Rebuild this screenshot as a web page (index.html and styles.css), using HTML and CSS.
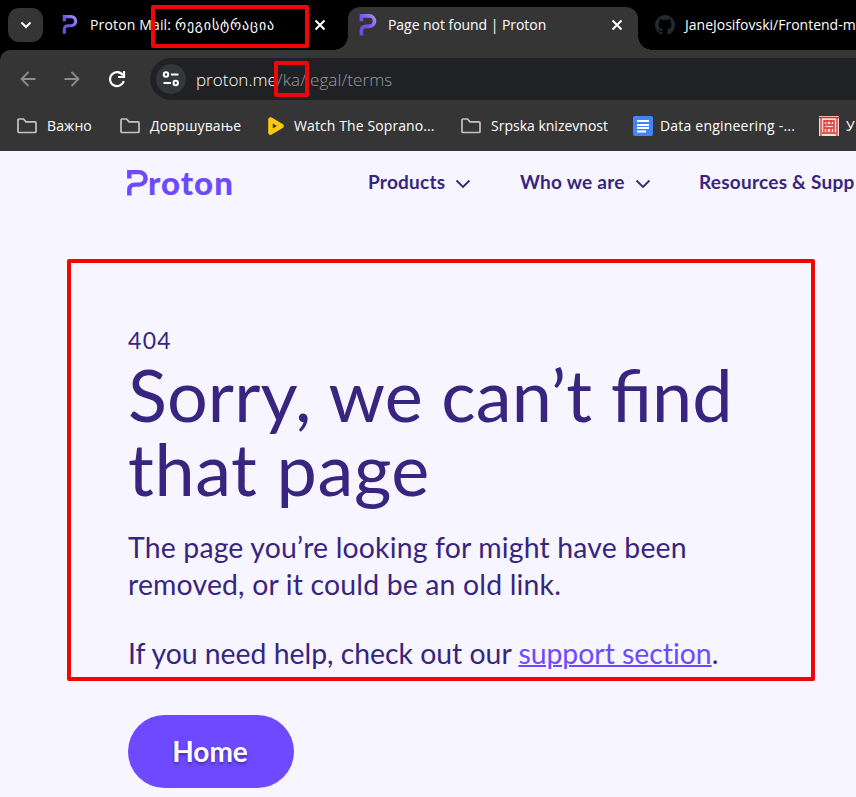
FILE: index.html
```
<!DOCTYPE html>
<html lang="en">
<head>
<meta charset="utf-8">
<title>Page not found | Proton</title>
<link rel="stylesheet" href="styles.css">
</head>
<body>
<svg class="defs" width="0" height="0">
  <defs>
    <linearGradient id="violet" x1="1" y1="0" x2="0" y2="1"><stop offset="0" stop-color="#a48cff"/><stop offset=".55" stop-color="#7254e8"/><stop offset="1" stop-color="#6b50d8"/></linearGradient>
    <symbol id="mark" viewBox="0 0 20 26"><path d="M2.200 8.500V2.200H11.500a6.200 6.200 0 0 1 0 12.400H8Q2.200 14.600 2.200 20V25.500" fill="none" stroke-width="4.200"/></symbol>
    <symbol id="folder" viewBox="0 0 22 18"><path d="M2 3a1 1 0 0 1 1-1H7.500l2.500 2.800H19a1 1 0 0 1 1 1V14.500a1 1 0 0 1-1 1H3a1 1 0 0 1-1-1Z" fill="none" stroke="#c4c4c4" stroke-width="1.700"/></symbol>
    <symbol id="close" viewBox="0 0 12 12"><path d="M1.500 1.500L10.500 10.500M10.500 1.500L1.500 10.500" stroke="#fff" stroke-width="2"/></symbol>
    <symbol id="chev" viewBox="0 0 16 10"><path d="M1.500 1.500L8 8L14.500 1.500" fill="none" stroke="#372580" stroke-width="1.800"/></symbol>
  </defs>
</svg>
<header class="browser">
  <div class="tabs">
    <button class="tab-search"><svg width="12" height="8" viewBox="0 0 12 8"><path d="M1.500 1.500L6 6L10.500 1.500" fill="none" stroke="#fff" stroke-width="2"/></svg></button>
    <div class="tab first"><svg class="fav" width="16" height="19"><use href="#mark"/></svg><span class="label t1">Proton Mail:&nbsp;<span class="georgian">რეგისტრაცია</span></span><svg class="x" width="12" height="12"><use href="#close"/></svg></div>
    <div class="tab active"><svg class="fav" width="18" height="22"><use href="#mark"/></svg><span class="label t2">Page not found | Proton</span><svg class="x" width="12" height="12"><use href="#close"/></svg></div>
    <div class="tab last"><svg class="gh" width="20" height="20" viewBox="0 0 16 16"><path fill="#24292f" d="M8 0C3.580 0 0 3.580 0 8c0 3.540 2.290 6.530 5.470 7.590.4.070.55-.17.55-.38v-1.490c-2.010.37-2.530-.49-2.690-.94-.09-.23-.48-.94-.82-1.130-.28-.15-.68-.52-.01-.53.63-.01 1.080.58 1.230.82.72 1.210 1.870.87 2.330.66.07-.52.28-.87.51-1.070-1.780-.2-3.640-.89-3.640-3.950 0-.87.310-1.590.82-2.150-.08-.2-.36-1.020.08-2.120 0 0 .67-.21 2.200.82a7.500 7.500 0 0 1 4 0c1.530-1.040 2.200-.82 2.200-.82.44 1.100.16 1.920.08 2.120.51.56.82 1.270.82 2.150 0 3.070-1.870 3.750-3.650 3.950.29.25.54.73.54 1.480v2.200c0 .21.150.46.55.38A8 8 0 0 0 16 8c0-4.420-3.580-8-8-8Z"/></svg><span class="label t3">JaneJosifovski/Frontend-m</span></div>
  </div>
  <div class="toolbar">
    <svg class="nav-icon" width="16" height="16" viewBox="0 0 16 16"><path d="M8.500 1L1.500 8L8.500 15M1.500 8H15.500" fill="none" stroke="#8c8c8c" stroke-width="1.800"/></svg>
    <svg class="nav-icon" width="16" height="16" viewBox="0 0 16 16"><path d="M7.500 1L14.500 8L7.500 15M14.500 8H.5" fill="none" stroke="#8c8c8c" stroke-width="1.800"/></svg>
    <svg class="nav-icon" width="18" height="18" viewBox="0 0 18 18"><path d="M14.800 5.200A7 7 0 1 0 15.800 11M16 1V7H10" fill="none" stroke="#fff" stroke-width="2.200"/></svg>
    <div class="address">
      <span class="site"><svg width="18" height="16" viewBox="0 0 18 16"><g fill="none" stroke="#fff" stroke-width="2"><circle cx="4" cy="3.500" r="2.200"/><path d="M9 3.500H16.500M1.500 12H9"/><circle cx="13.700" cy="12" r="2.200"/></g></svg></span>
      <span class="url host">proton.me</span><span class="url path">/ka/legal/terms</span>
    </div>
  </div>
  <div class="bookmarks">
    <div class="bm b1"><svg width="22" height="18"><use href="#folder"/></svg><span>Важно</span></div>
    <div class="bm b2"><svg width="22" height="18"><use href="#folder"/></svg><span>Довршување</span></div>
    <div class="bm b3"><svg width="18" height="20" viewBox="0 0 18 20"><path d="M3.500 3.500L14.500 10L3.500 16.500Z" fill="none" stroke="#fbc90d" stroke-width="4.600" stroke-linejoin="round"/></svg><span>Watch The Soprano...</span></div>
    <div class="bm b4"><svg width="22" height="18"><use href="#folder"/></svg><span>Srpska knizevnost</span></div>
    <div class="bm b5"><svg width="20" height="20" viewBox="0 0 20 20"><rect width="20" height="20" rx="2" fill="#4285f4"/><path d="M4 5H16M4 9H16M4 12H16M4 15.500H13" stroke="#fff" stroke-width="1.900"/></svg><span>Data engineering -...</span></div>
    <div class="bm b6"><svg width="20" height="20" viewBox="0 0 20 20"><rect width="20" height="20" fill="#f6dcd8"/><path d="M0 1.500H20M2 2V20M18 2V20M5 4V16M15 4V16M5 5H15M5 9H15M5 12H15M3 17H17M8 4V8M12 4V8M8 12V16M12 12V16" stroke="#d5302c" stroke-width="1.300"/></svg><span>У</span></div>
  </div>
</header>
<main>
  <nav>
    <a class="logo"><svg width="21" height="26" viewBox="0 0 20 26" preserveAspectRatio="none"><use href="#mark"/></svg><span>roton</span></a>
    <a class="menu m1"><span>Products</span><svg width="16" height="10"><use href="#chev"/></svg></a>
    <a class="menu m2"><span>Who we are</span><svg width="16" height="10"><use href="#chev"/></svg></a>
    <a class="menu m3"><span>Resources &amp; Supp</span></a>
  </nav>
  <section class="error">
    <p class="code">404</p>
    <h1><span>Sorry, we can’t </span><span class="lig">fi</span><span>nd</span><br><span class="second">that page</span></h1>
    <p class="copy">The page you’re looking for might have been<br>removed, or it could be an old link.</p>
    <p class="copy help">If you need help, check out our <a>support section</a>.</p>
    <a class="home">Home</a>
  </section>
</main>
<div class="mark-box box-title"></div>
<div class="mark-box box-locale"></div>
<div class="mark-box box-error"></div>
</body>
</html>
```
FILE: styles.css
```
* { box-sizing: border-box; }
body { margin: 0; width: 856px; height: 797px; overflow: hidden; position: relative; background: #f7f5ff; font-family: Lato, sans-serif; color: #372580; }
svg { display: block; flex: none; }
.defs { position: absolute; }
span, a { white-space: nowrap; }
.browser { height: 151px; background: #000; color: #fff; font-family: "Open Sans", "DejaVu Sans", sans-serif; overflow: hidden; }
.tabs { height: 50px; display: flex; padding-left: 8px; }
.tab-search { flex: none; width: 35px; height: 34px; margin-top: 8px; border: 0; border-radius: 11px; background: #353535; display: flex; align-items: center; justify-content: center; padding: 0; }
.tab { display: flex; align-items: center; height: 43px; margin-top: 7px; padding-bottom: 8px; font-size: 14px; flex: none; }
.fav { stroke: url(#violet); }
.logo svg { stroke: #6d4aff; }
.first { width: 305px; padding-left: 19px; }
.first .t1 { margin-left: 12px; letter-spacing: .15px; }
.first .x, .active .x { margin-left: auto; }
.first .x { margin-right: 22px; }
.georgian { font-family: "DejaVu Sans", sans-serif; font-size: 14px; letter-spacing: .85px; }
.active { width: 290px; padding-left: 11px; background: #353535; border-radius: 12px 12px 0 0; position: relative; }
.active .label { margin-left: 11px; letter-spacing: -.05px; }
.active .x { margin-right: 15px; }
.active::before, .active::after { content: ""; position: absolute; bottom: 0; width: 14px; height: 14px; }
.active::before { left: -14px; background: radial-gradient(circle at 0 0, transparent 13.5px, #353535 14px); }
.active::after { right: -14px; background: radial-gradient(circle at 100% 0, transparent 13.5px, #353535 14px); }
.last { padding-left: 17px; }
.last .label { margin-left: 10px; }
.toolbar { height: 57px; background: #353535; border-radius: 10px 0 0 0; display: flex; align-items: center; padding-left: 20px; }
.nav-icon { margin-right: 28px; }
.nav-icon:nth-child(3) { margin-right: 24px; }
.address { flex: 1; height: 42px; margin-top: 1px; background: #202124; border-radius: 21px 0 0 21px; display: flex; align-items: center; padding-left: 6px; font-size: 17px; font-weight: 300; }
.site { width: 30px; height: 30px; border-radius: 50%; background: #353638; display: flex; align-items: center; justify-content: center; margin-right: 10px; }
.path { color: #9a9a9c; letter-spacing: .1px; }
.bookmarks { height: 44px; background: #353535; display: flex; align-items: center; padding: 0 0 7px 16px; font-size: 14px; letter-spacing: .1px; }
.bm { display: flex; align-items: center; gap: 9px; flex: none; }
.b1 { width: 103px; }
.b2 { width: 148px; }
.b3 { width: 193px; }
.b4 { width: 173px; letter-spacing: 0; }
.b5 { width: 186px; gap: 7px; letter-spacing: .2px; }
.b6 { gap: 7px; }
nav { height: 64px; display: flex; align-items: center; padding: 0 0 3px 127px; font-size: 19px; font-weight: 700; letter-spacing: .25px; overflow: hidden; }
.logo { display: flex; flex: none; width: 241px; color: #6d4aff; font: 900 33px Lato, sans-serif; letter-spacing: 1px; align-items: center; }
.logo svg { margin-top: 2px; }
.menu { display: flex; align-items: center; flex: none; }
.menu svg { margin: 4px 0 0 10px; }
.m1 { width: 152px; }
.m2 { width: 179px; }
.error { padding: 110px 0 0 128px; }
p, h1 { margin: 0; }
.code { font-size: 23px; line-height: 30px; letter-spacing: 1.3px; }
h1 { font-size: 72px; line-height: 74px; font-weight: 400; margin-top: 2px; letter-spacing: .1px; }
.lig { letter-spacing: 0; }
.second { letter-spacing: .6px; }
.copy { font-size: 28.4px; line-height: 37px; margin-top: 24px; letter-spacing: .17px; }
.help { margin-top: 32px; letter-spacing: -.02px; }
.copy a { color: #6d4aff; text-decoration: underline; text-decoration-thickness: 2px; }
.home { display: flex; width: 166px; height: 73px; border-radius: 37px; margin-top: 43px; background: #6d4aff; color: #fff; font-size: 28px; font-weight: 700; align-items: center; justify-content: center; padding: 0 2px 2px 0; text-shadow: 0 2px 3px #2a1a7099; }
.mark-box { position: absolute; border: 4px solid #f00508; border-radius: 2px; }
.box-title { left: 151px; top: 5px; width: 158px; height: 43px; }
.box-locale { left: 274px; top: 61px; width: 35px; height: 36px; }
.box-error { left: 67px; top: 259px; width: 748px; height: 422px; }
```
